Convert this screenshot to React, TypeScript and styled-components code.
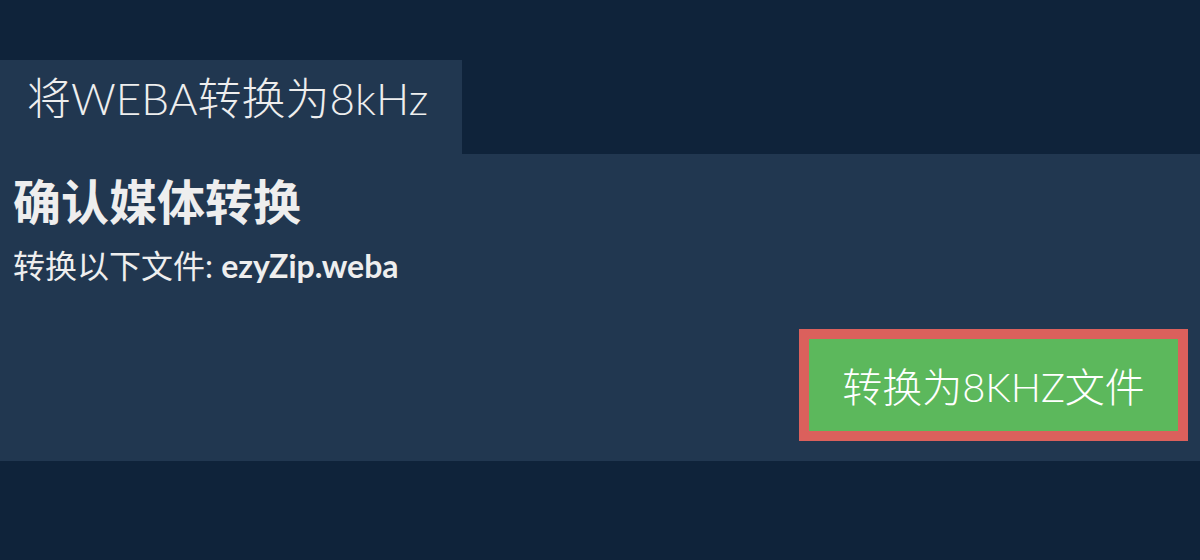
import React from 'react';
import styled, { createGlobalStyle } from 'styled-components';

const GlobalStyle = createGlobalStyle`
  html, body {
    margin: 0;
    padding: 0;
    background: #0f233a;
  }
  body {
    font-family: "Lato", "Noto Sans CJK SC", sans-serif;
    color: #eeeeee;
  }
`;

const Page = styled.div`
  width: 1200px;
  height: 560px;
  padding-top: 60px;
  box-sizing: border-box;
  background: #0f233a;
`;

const Tab = styled.div`
  display: inline-flex;
  align-items: center;
  height: 94px;
  width: 462px;
  box-sizing: border-box;
  padding: 0 0 22px 27px;
  background: #213750;
  font-size: 44px;
  font-weight: 300;
  white-space: nowrap;
`;

const Panel = styled.div`
  height: 307px;
  box-sizing: border-box;
  padding: 16px 12px 0 13px;
  background: #213750;
  display: flex;
  flex-direction: column;
`;

const Heading = styled.h1`
  margin: 0;
  font-size: 48px;
  font-weight: 700;
  line-height: 64px;
`;

const FileLine = styled.p`
  margin: 12px 0 0;
  font-size: 32px;
  line-height: 40px;
  font-weight: 400;

  b {
    font-weight: 700;
  }
`;

const Actions = styled.div`
  display: flex;
  justify-content: flex-end;
  margin-top: 43px;
`;

const ConvertButton = styled.button`
  width: 389px;
  height: 112px;
  box-sizing: border-box;
  border: 10px solid #db605c;
  background: #5cb85c;
  color: #ffffff;
  font-family: inherit;
  font-size: 40px;
  font-weight: 300;
  cursor: pointer;
  padding: 0;
`;

export default function App() {
  return (
    <>
      <GlobalStyle />
      <Page>
        <Tab>将WEBA转换为8kHz</Tab>
        <Panel>
          <Heading>确认媒体转换</Heading>
          <FileLine>
            转换以下文件: <b>ezyZip.weba</b>
          </FileLine>
          <Actions>
            <ConvertButton>转换为8KHZ文件</ConvertButton>
          </Actions>
        </Panel>
      </Page>
    </>
  );
}
